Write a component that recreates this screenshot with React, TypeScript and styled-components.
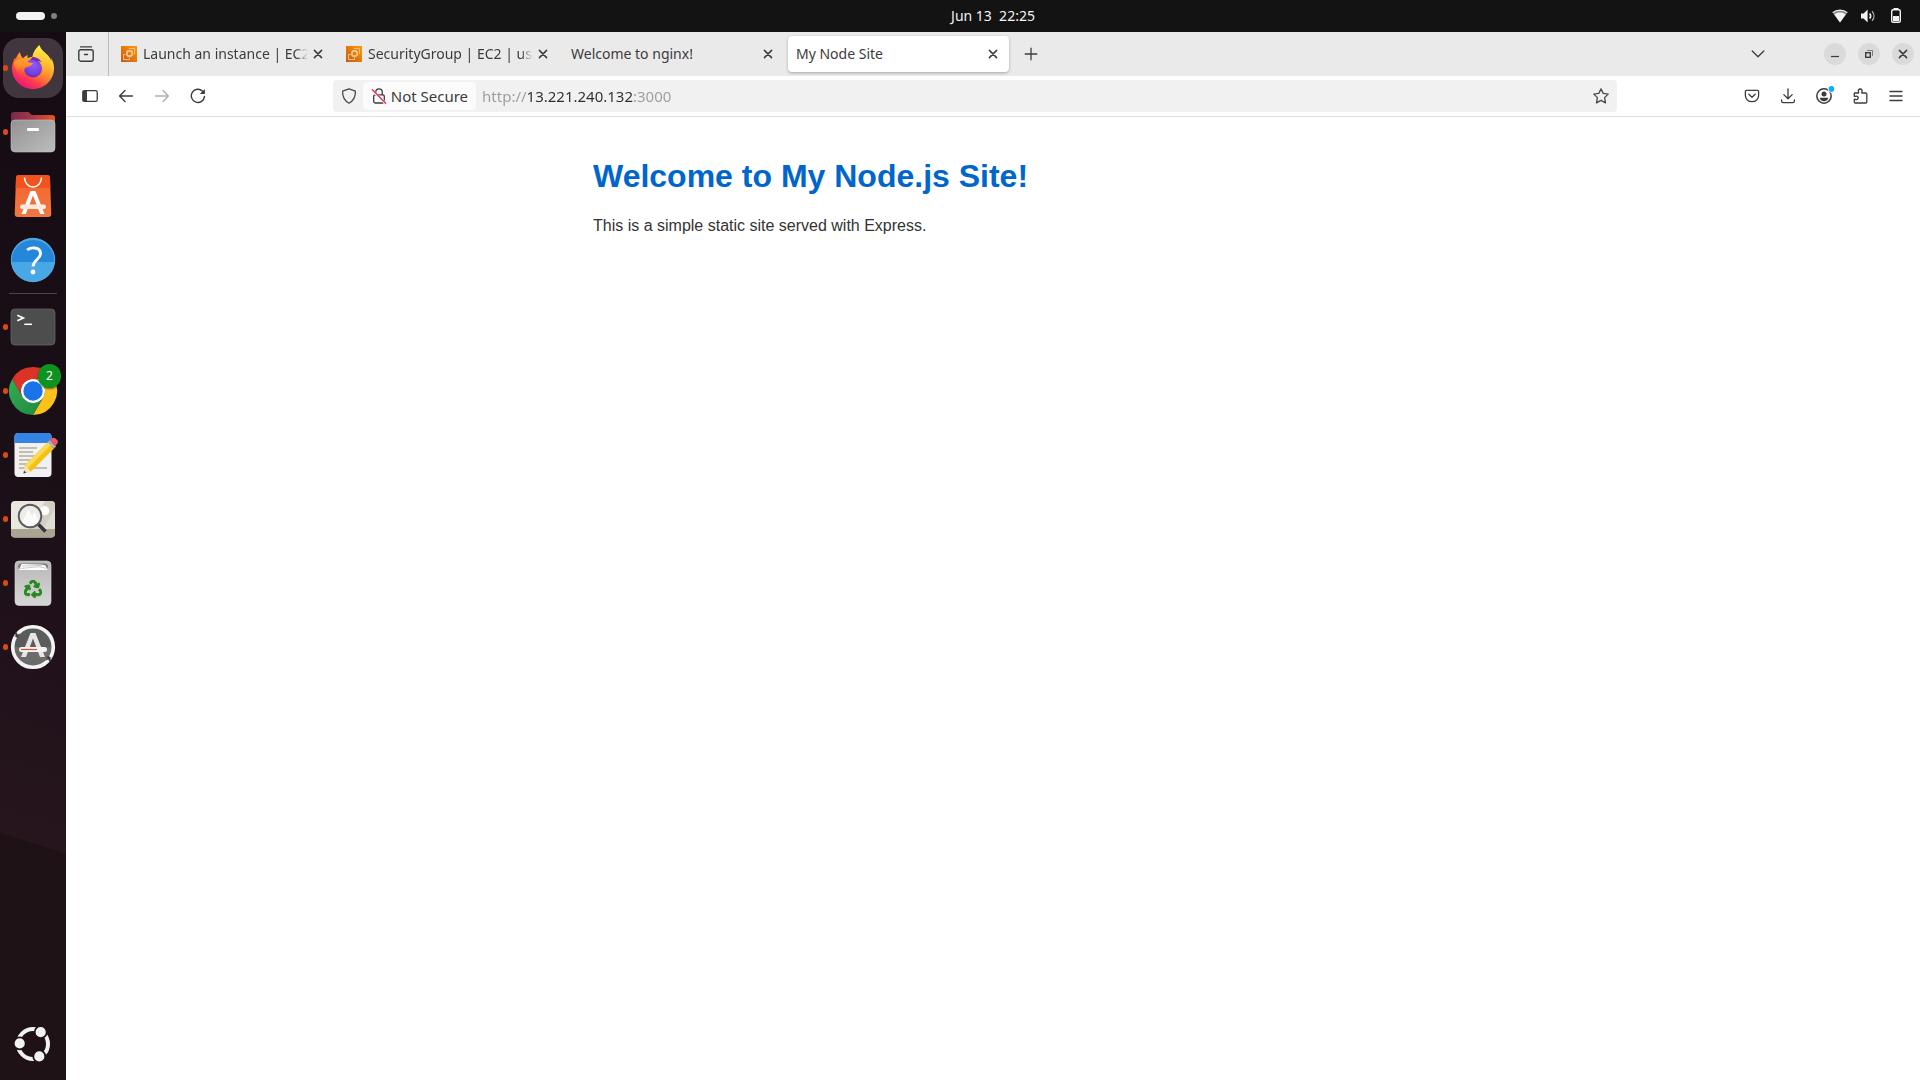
import React from "react";
import styled, { createGlobalStyle } from "styled-components";
import { FaRecycle } from "react-icons/fa";

const uiFont = `"Noto Sans", "Open Sans", sans-serif`;

const GlobalStyle = createGlobalStyle`
  *, *::before, *::after { box-sizing: border-box; }
  html, body { margin: 0; padding: 0; }
  body { background: #fff; font-family: ${uiFont}; color: #3c3c3c; }
  button { font: inherit; color: inherit; background: none; border: 0; padding: 0; cursor: default; }
`;

/* ---------- Shell ---------- */

const Desktop = styled.div`
  display: flex;
  flex-direction: column;
  min-height: 100vh;
`;

const TopBar = styled.header`
  display: grid;
  grid-template-columns: 66px 1fr auto 1fr;
  align-items: center;
  height: 32px;
  background: #131313;
  color: #f2f2f2;
`;

const Workspaces = styled.button`
  display: flex;
  align-items: center;
  gap: 6px;
  justify-self: center;
  padding-left: 6px;
`;

const WorkspaceMark = styled.span<{ $active?: boolean }>`
  width: ${(p) => (p.$active ? 29 : 6)}px;
  height: ${(p) => (p.$active ? 8 : 6)}px;
  border-radius: 4px;
  background: ${(p) => (p.$active ? "#f2f2f2" : "#808080")};
`;

const Clock = styled.button`
  grid-column: 3;
  font-size: 14px;
  line-height: 20px;
  white-space: pre;
`;

const SystemStatus = styled.button`
  display: flex;
  align-items: center;
  gap: 12px;
  justify-self: end;
  padding-right: 16px;
`;

const Body = styled.div`
  display: flex;
  flex: 1;
`;

/* ---------- Dock ---------- */

const Dock = styled.nav`
  display: flex;
  flex-direction: column;
  flex: none;
  width: 66px;
  padding: 4px 0;
  background: linear-gradient(
    197.6deg,
    #150b12 0%,
    #1a0f16 38%,
    #20111a 58%,
    #26151d 76.8%,
    #1e1217 76.9%,
    #1f1217 100%
  );
`;

const DockItem = styled.button<{ $active?: boolean; $running?: boolean }>`
  position: relative;
  display: grid;
  place-items: center;
  width: 60px;
  height: 60px;
  margin: 2px 3px;
  border-radius: 16px;
  background: ${(p) => (p.$active ? "#41363d" : "transparent")};

  &::before {
    content: "";
    position: absolute;
    left: 0;
    top: 27px;
    width: 5px;
    height: 6px;
    border-radius: 3px;
    background: ${(p) => (p.$running ? "#da4a16" : "transparent")};
  }
`;

const DockDivider = styled.hr`
  width: 48px;
  height: 1px;
  margin: 1px auto;
  border: 0;
  background: #4e454a;
`;

const DockSpacer = styled.div`
  flex: 1;
`;

const Badge = styled.span`
  position: absolute;
  top: 3px;
  right: 2px;
  width: 23px;
  height: 24px;
  border-radius: 12px;
  background: #0e9220;
  box-shadow: 0 1px 2px rgba(0, 0, 0, 0.5);
  color: #fff;
  font-size: 12px;
  line-height: 24px;
  text-align: center;
`;

const AppSvg = styled.svg`
  width: 48px;
  height: 48px;
  overflow: visible;
`;

/* ---------- Browser ---------- */

const Browser = styled.main`
  display: flex;
  flex-direction: column;
  flex: 1;
  min-width: 0;
  background: #fff;
`;

const TabStrip = styled.div`
  display: flex;
  align-items: center;
  height: 44px;
  padding-right: 6px;
  background: #eaeaea;
`;

const StripStart = styled.div`
  display: grid;
  place-items: center;
  align-self: stretch;
  width: 43px;
  margin-right: 4px;
  padding-right: 3px;
  border-right: 1px solid #bdbdbd;
`;

const Tabs = styled.div`
  display: flex;
  gap: 4px;
`;

const Tab = styled.div<{ $selected?: boolean }>`
  display: flex;
  align-items: center;
  width: 221px;
  height: 36px;
  padding: 0 6px 0 8px;
  border-radius: 4px;
  background: ${(p) => (p.$selected ? "#fff" : "transparent")};
  box-shadow: ${(p) => (p.$selected ? "0 1px 3px rgba(0, 0, 0, 0.3)" : "none")};
`;

const TabTitle = styled.button<{ $fade?: boolean }>`
  flex: 1;
  min-width: 0;
  height: 24px;
  overflow: hidden;
  font-size: 14px;
  line-height: 24px;
  text-align: left;
  white-space: nowrap;
  mask-image: ${(p) =>
    p.$fade ? "linear-gradient(to left, transparent, #000 12px)" : "none"};
`;

const Favicon = styled.svg`
  flex: none;
  width: 16px;
  height: 16px;
  margin-right: 6px;
`;

const TabClose = styled.button`
  display: grid;
  place-items: center;
  width: 20px;
  height: 20px;
`;

const IconButton = styled.button<{ $faded?: boolean }>`
  display: grid;
  place-items: center;
  width: 36px;
  height: 32px;
  color: ${(p) => (p.$faded ? "#b0b0b0" : "#3c3c3c")};
`;

const NewTab = styled(IconButton)`
  margin-left: 4px;
`;

const StripSpacer = styled.div`
  flex: 1;
`;

const WindowControls = styled.div`
  display: flex;
  gap: 12px;
  margin-left: 48px;
`;

const WindowButton = styled.button`
  display: grid;
  place-items: center;
  width: 22px;
  height: 22px;
  border-radius: 50%;
  background: #dadada;
`;

const Toolbar = styled.div`
  display: flex;
  align-items: center;
  height: 41px;
  padding: 0 6px;
  border-bottom: 1px solid #e0e0e0;
`;

const Spring = styled.div`
  flex: 1 1 0;
`;

const UrlBar = styled.form`
  display: flex;
  align-items: center;
  flex: 11 1 0;
  min-width: 0;
  height: 32px;
  border-radius: 4px;
  background: #f1f1f1;
`;

const UrlButton = styled.button`
  display: grid;
  place-items: center;
  width: 32px;
  height: 32px;
  color: #4a4a4a;
`;

const Identity = styled.button`
  display: flex;
  align-items: center;
  gap: 4px;
  height: 28px;
  margin-right: 6px;
  margin-left: -2px;
  padding: 0 8px;
  border-radius: 4px;
  background: #fbfbfb;
  font-size: 15px;
  line-height: 28px;
  white-space: nowrap;
`;

const UrlInput = styled.input`
  flex: 1;
  min-width: 0;
  height: 28px;
  padding: 0;
  border: 0;
  outline: 0;
  font-family: ${uiFont};
  font-size: 15px;
  color: #2f2f2f;
  background: linear-gradient(
    to right,
    #9c9c9c 46px,
    #2f2f2f 46px,
    #2f2f2f 152px,
    #9c9c9c 152px
  );
  background-clip: text;
  -webkit-background-clip: text;
  -webkit-text-fill-color: transparent;
`;

/* ---------- Page ---------- */

const Page = styled.article`
  width: 100%;
  max-width: 800px;
  margin: 40px auto;
  font-family: "Liberation Sans", Arial, sans-serif;
  color: #333;
`;

const Heading = styled.h1`
  margin: 0 0 22px;
  font-size: 32px;
  line-height: 38px;
  font-weight: 700;
  color: #0066cc;
`;

const Paragraph = styled.p`
  margin: 0;
  font-size: 16px;
  line-height: 18px;
`;

/* ---------- Small icons ---------- */

type IconProps = { children: React.ReactNode; size?: number; width?: number };

const Icon = ({ children, size = 16, width = 1.3 }: IconProps) => (
  <svg
    width={size}
    height={size}
    viewBox="0 0 16 16"
    fill="none"
    stroke="currentColor"
    strokeWidth={width}
    strokeLinecap="round"
    strokeLinejoin="round"
    aria-hidden="true"
  >
    {children}
  </svg>
);

const CloseIcon = () => (
  <Icon width={1.5}>
    <path d="M4.4 4.4 11.6 11.6M11.6 4.4 4.4 11.6" />
  </Icon>
);

const Ec2Favicon = () => (
  <Favicon viewBox="0 0 16 16" aria-hidden="true">
    <defs>
      <linearGradient id="ec2" x1="0" y1="1" x2="1" y2="0">
        <stop offset="0" stopColor="#cc5a0c" />
        <stop offset="1" stopColor="#fa9a08" />
      </linearGradient>
    </defs>
    <rect width="16" height="16" fill="url(#ec2)" />
    <g fill="none" stroke="#fff">
      <rect x="6" y="5" width="5" height="5" rx=".6" strokeWidth="1" />
      <path d="M8 3.200V2.500h5.500v5.500h-1" strokeWidth=".6" opacity=".75" />
      <path d="M4.500 8.500h-2v5h6v-2" strokeWidth=".7" opacity=".8" />
    </g>
  </Favicon>
);

const TabOverviewIcon = () => (
  <Icon width={1.4}>
    <path d="M2.6.9h10.8" />
    <rect x=".8" y="3.8" width="14.4" height="11.4" rx="2" />
    <path d="M6.5 8.5h3" />
  </Icon>
);

const SidebarIcon = () => (
  <Icon>
    <rect x=".8" y="2.6" width="14.4" height="10.8" rx="1.4" />
    <path d="M1 3h3.4v10H1z" fill="currentColor" stroke="none" />
    <path d="M4.4 2.8v10.4" strokeWidth="1" />
  </Icon>
);

const BackIcon = () => (
  <Icon width={1.4}>
    <path d="M14.4 8H1.8M7 2.6 1.6 8 7 13.4" />
  </Icon>
);

const ForwardIcon = () => (
  <Icon width={1.4}>
    <path d="M1.6 8h12.6M9 2.6 14.4 8 9 13.4" />
  </Icon>
);

const ReloadIcon = () => (
  <Icon width={1.4}>
    <path d="M14.5 8.4A6.6 6.6 0 1 1 12.6 3.2" />
    <path d="M14.9 1v5h-5z" fill="currentColor" stroke="none" />
  </Icon>
);

const ShieldIcon = () => (
  <Icon>
    <path d="M8 .8 14.4 3.2C14.6 8.600 12.6 12.6 8 15.200 3.400 12.600 1.400 8.600 1.600 3.200Z" />
  </Icon>
);

const InsecureIcon = () => (
  <Icon>
    <path d="M4.700 6.600V4.200a3.300 3.300 0 0 1 6.600 0V6.600" />
    <rect x="2.700" y="6.800" width="10.600" height="8.200" rx="1.500" />
    <path d="M1.600 2.800 14.600 15.400" stroke="#fbfbfb" strokeWidth="2.600" />
    <path d="M1.400 1.800 14.600 15.200" stroke="#e22850" strokeWidth="1.300" />
  </Icon>
);

const StarIcon = () => (
  <Icon>
    <path d="M8 .9 10.200 5.400 15.200 6.100 11.600 9.600 12.500 14.900 8 12.400 3.500 14.900 4.400 9.600.8 6.100 5.800 5.400Z" />
  </Icon>
);

const PocketIcon = () => (
  <Icon>
    <path d="M2.600 2.400h10.800a1.200 1.200 0 0 1 1.200 1.200v4.200a6.600 5.800 0 0 1-13.200 0V3.600a1.200 1.200 0 0 1 1.200-1.200Z" />
    <path d="M4.800 6.200 8 9.200l3.200-3" />
  </Icon>
);

const DownloadIcon = () => (
  <Icon>
    <path d="M8 .8v9.800M3.800 6.600 8 10.800l4.200-4.200M1.600 11.800v1.200a1.600 1.600 0 0 0 1.600 1.600h9.600a1.600 1.600 0 0 0 1.600-1.600v-1.200" />
  </Icon>
);

const AccountIcon = () => (
  <svg width="20" height="20" viewBox="-2 -2 20 20" fill="none" aria-hidden="true">
    <circle cx="8" cy="8" r="7.200" stroke="currentColor" strokeWidth="1.500" />
    <circle cx="8" cy="6" r="2.500" fill="currentColor" />
    <path d="M3.800 9.800h8.400c0 2-1.800 3.400-4.200 3.400S3.800 11.800 3.800 9.800Z" fill="currentColor" />
    <circle cx="15.500" cy="1" r="3.800" fill="#fff" />
    <circle cx="15.500" cy="1" r="2.900" fill="#08b0fb" />
  </svg>
);

const ExtensionsIcon = () => (
  <Icon>
    <path d="M2.600 5h3.600c.6 0 .5-.5.3-1-.7-1.600.2-3 1.700-3s2.400 1.400 1.700 3c-.2.500-.3 1 .3 1h3.400a1.200 1.200 0 0 1 1.200 1.200v7.600a1.200 1.200 0 0 1-1.200 1.200H3.300a1 1 0 0 1-1-1v-2.300c0-.6.500-.5 1-.3 1.500.600 2.900-.2 2.900-1.600S4.800 7.700 3.300 8.300c-.5.200-1 .200-1-.4V5.300Z" />
  </Icon>
);

const MenuIcon = () => (
  <Icon width={1.300}>
    <path d="M2 3.500h12M2 8h12M2 12.500h12" />
  </Icon>
);

const PlusIcon = () => (
  <Icon width={1.300}>
    <path d="M8 2.200v11.600M2.200 8h11.600" />
  </Icon>
);

const ChevronIcon = () => (
  <Icon width={1.300}>
    <path d="M2.200 5 8 10.800 13.800 5" />
  </Icon>
);

const WifiIcon = () => (
  <svg width="16" height="16" viewBox="0 0 16 16" aria-hidden="true">
    <path d="M.6 4.600C5 1.200 11 1.200 15.400 4.600L8 14.600Z" fill="#8a8a8a" />
    <path d="M.6 4.600C5 1.200 11 1.200 15.400 4.600" fill="none" stroke="#f2f2f2" strokeWidth="1.200" />
    <path d="M2.200 6.400C5.600 4 10.400 4 13.800 6.400L8 14.600Z" fill="#f2f2f2" />
  </svg>
);

const VolumeIcon = () => (
  <svg width="16" height="16" viewBox="0 0 16 16" fill="none" stroke="#f2f2f2" aria-hidden="true">
    <path d="M1 5.600h2.600L7.600 1.600v12.800L3.600 10.400H1Z" fill="#f2f2f2" stroke="none" />
    <path d="M9.600 5.400c1.300 1.500 1.300 3.700 0 5.200" strokeWidth="1.500" />
    <path d="M12 3.200c2.600 2.800 2.600 6.800 0 9.600" strokeWidth="1.300" opacity=".7" />
  </svg>
);

const BatteryIcon = () => (
  <svg width="16" height="16" viewBox="0 0 16 16" aria-hidden="true">
    <rect x="5.500" y="0" width="5" height="2" fill="#f2f2f2" />
    <rect x="3.700" y="1.700" width="8.600" height="12.600" rx="1.500" fill="none" stroke="#f2f2f2" strokeWidth="1.400" />
    <rect x="5" y="8" width="6" height="5" fill="#f2f2f2" />
  </svg>
);

const MinimizeIcon = () => (
  <Icon width={1.200}>
    <path d="M4 10.500h8" strokeLinecap="butt" />
  </Icon>
);

const RestoreIcon = () => (
  <Icon width={1.400}>
    <rect x="4.700" y="6.700" width="4.600" height="4.600" strokeLinejoin="miter" />
    <path d="M6.500 4.500h5v5" strokeWidth="1" opacity=".6" strokeLinejoin="miter" />
  </Icon>
);

/* ---------- Dock app icons ---------- */

const FirefoxApp = () => (
  <AppSvg viewBox="0 0 48 48" aria-hidden="true">
    <defs>
      <linearGradient id="ffBody" x1=".8" y1=".1" x2=".25" y2=".95">
        <stop offset="0" stopColor="#fff44f" />
        <stop offset=".3" stopColor="#ffb931" />
        <stop offset=".55" stopColor="#ff7b2e" />
        <stop offset=".78" stopColor="#ff3a50" />
        <stop offset="1" stopColor="#e9177c" />
      </linearGradient>
      <linearGradient id="ffTail" x1=".5" y1="0" x2=".5" y2="1">
        <stop offset="0" stopColor="#fff04c" />
        <stop offset=".5" stopColor="#ffc233" />
        <stop offset="1" stopColor="#ff8a2a" stopOpacity="0" />
      </linearGradient>
      <radialGradient id="ffGlobe" cx=".55" cy=".3" r=".75">
        <stop offset="0" stopColor="#9059ff" />
        <stop offset=".6" stopColor="#7642e5" />
        <stop offset="1" stopColor="#5b2bb5" />
      </radialGradient>
      <linearGradient id="ffHead" x1="0" y1="0" x2="0" y2="1">
        <stop offset="0" stopColor="#ffa22a" />
        <stop offset=".4" stopColor="#ff8a2a" />
        <stop offset="1" stopColor="#ff4a48" stopOpacity="0" />
      </linearGradient>
    </defs>
    <path
      d="M11 8C8.500 10.500 7.200 13 6.800 15.500L6 13.500C4 17 3 20.500 3 24.500 3 36 12.500 45 24 45S45 36 45 24.500C45 20 43.800 16.500 41.500 13.500 42.300 15.500 42.500 16.500 42.400 17.500 41 12.500 37.500 10 34.500 7.500 32 5.300 31 3.500 30.500 1.300 27 4 24 9 23.500 13 21.500 13 20 13.500 18.800 14.300 18.500 13.200 18.400 12.300 18.600 11 16.500 12 15 13.100 14 14.300 12.300 12.500 11.300 10.500 11 8Z"
      fill="url(#ffBody)"
    />
    <path
      d="M30.500 1.300C27 4 24 9 23.500 13 29 13.500 33.800 17 34.300 24 34.500 30 31 34 26 35.500 35 37 41.500 30 41.800 22 42 14.500 38 10.500 34.500 7.500 32 5.300 31 3.500 30.500 1.300Z"
      fill="url(#ffTail)"
      opacity=".85"
    />
    <circle cx="24" cy="24.500" r="9" fill="url(#ffGlobe)" />
    <path d="M23.500 13C28 13 31 15.500 32.500 18 30.500 17 29 17 28 17.300 30 19 31 21 31 21 28 17 25 15.500 21 16Z" fill="#6a2fc0" />
    <path
      d="M5 19C8 15.500 11 14.300 14 14.800 16.500 15.500 17.300 16.500 18 17.600 19.500 18.600 22 18.800 24 19 23.800 21 22 22 19.800 22.500 17 23.300 15.500 24.500 15.200 27 15 30 16.500 32 18.500 33.500 12 34 6 28 5 19Z"
      fill="url(#ffHead)"
    />
  </AppSvg>
);

const FilesApp = () => (
  <AppSvg viewBox="0 0 48 48" aria-hidden="true">
    <defs>
      <linearGradient id="flBack" x1="0" y1="0" x2="1" y2="0">
        <stop offset="0" stopColor="#77294f" />
        <stop offset=".5" stopColor="#a83a44" />
        <stop offset="1" stopColor="#ea5420" />
      </linearGradient>
      <linearGradient id="flFront" x1="0" y1="0" x2="1" y2="1">
        <stop offset="0" stopColor="#929292" />
        <stop offset="1" stopColor="#bdbdbd" />
      </linearGradient>
    </defs>
    <path d="M5 4H19C21 4 21 7 23.500 7H43a3 3 0 0 1 3 3V30H2V7a3 3 0 0 1 3-3Z" fill="url(#flBack)" />
    <rect x="2" y="12" width="44" height="32" rx="4" fill="url(#flFront)" stroke="#c4c4c4" strokeWidth=".6" />
    <rect x="18" y="20" width="12" height="3" rx="1" fill="#fff" />
  </AppSvg>
);

const SoftwareApp = () => (
  <AppSvg viewBox="0 0 48 48" aria-hidden="true">
    <defs>
      <linearGradient id="swBag" x1="0" y1="0" x2="0" y2="1">
        <stop offset="0" stopColor="#f66330" />
        <stop offset="1" stopColor="#f0783e" />
      </linearGradient>
    </defs>
    <path d="M10 3h28a3 3 0 0 1 3 3l1.300 36a3 3 0 0 1-3 3H8.700a3 3 0 0 1-3-3L7 6a3 3 0 0 1 3-3Z" fill="url(#swBag)" />
    <path d="M10 3h28a3 3 0 0 1 3 3l.3 10H6.700L7 6a3 3 0 0 1 3-3Z" fill="#f1531e" />
    <path d="M15.500 5.500a8.500 9.500 0 0 0 17 0" fill="none" stroke="#fff" strokeWidth="1.600" />
    <path d="M21.500 19h5l9 23h-4.300L24 23.500 16.800 42h-4.300Z" fill="#fff" />
    <rect x="11" y="32.500" width="26" height="4.500" rx="2.200" fill="#ffe9df" />
    <path d="M20.500 25 24 19l3.500 6-3.500-1.500Z" fill="#fff" />
  </AppSvg>
);

const HelpApp = () => (
  <AppSvg viewBox="0 0 48 48" aria-hidden="true">
    <circle cx="24" cy="24" r="22" fill="#4aa7e6" />
    <path d="M2 26a22 22 0 1 1 44 0Z" fill="#2487da" />
    <circle cx="24" cy="24" r="21.700" fill="none" stroke="#5fb2ea" strokeWidth=".7" />
    <path d="M18.200 14C21 11 31.500 10.500 31.500 17.500 31.500 23.500 24.300 23.500 24 30.500" fill="none" stroke="#fff" strokeWidth="2.900" />
    <circle cx="24" cy="36" r="2.400" fill="#fff" />
  </AppSvg>
);

const TerminalApp = () => (
  <AppSvg viewBox="0 0 48 48" aria-hidden="true">
    <rect x="2" y="6" width="44" height="36" rx="4" fill="#4d4d4d" stroke="#636363" strokeWidth=".8" />
    <path d="M8.300 12.300 14.300 15 8.300 17.800" fill="none" stroke="#fff" strokeWidth="1.700" />
    <path d="M15.300 21.300H23" stroke="#fff" strokeWidth="1.500" />
  </AppSvg>
);

const ChromeApp = () => (
  <AppSvg viewBox="0 0 48 48" aria-hidden="true">
    <defs>
      <linearGradient id="crGreen" x1="0" y1=".2" x2=".8" y2="1">
        <stop offset="0" stopColor="#34a853" />
        <stop offset="1" stopColor="#1e8e3e" />
      </linearGradient>
    </defs>
    <path d="M3.200 12A24 24 0 0 1 44.800 12H24A12 12 0 0 0 13.600 30Z" fill="#de3226" />
    <path d="M44.800 12A24 24 0 0 1 24 48L34.400 30A12 12 0 0 0 24 12Z" fill="#fcc21b" />
    <path d="M24 48A24 24 0 0 1 3.200 12L13.600 30A12 12 0 0 0 34.400 30Z" fill="url(#crGreen)" />
    <circle cx="24" cy="24" r="12" fill="#fff" />
    <circle cx="24" cy="24" r="9.700" fill="#1a73e8" />
  </AppSvg>
);

const EditorApp = () => (
  <AppSvg viewBox="0 0 48 48" aria-hidden="true">
    <rect x="5.500" y="2" width="37" height="44" rx="4" fill="#f1f1f1" />
    <path d="M9.500 2h29a4 4 0 0 1 4 4v6h-37V6a4 4 0 0 1 4-4Z" fill="#3584e4" />
    <path d="M10 17h18M10 21h14M10 25h17M10 29h13M10 33h10M10 37h8M24 37h14" stroke="#c2beb2" strokeWidth="1.800" />
    <path d="M14.500 42.500 15.800 34.200 38.500 11.500 45 17.500 22 40.500Z" fill="#f5c211" />
    <path d="M15.800 34.200 38.500 11.500 41.500 14.200 18.500 37.500Z" fill="#fadb59" />
    <path d="M14.500 42.500 15.800 34.200 22 40.500Z" fill="#f4e3bd" />
    <path d="M14.500 42.500 15 39.500 17.300 41.700Z" fill="#3d3846" />
    <path d="m38.500 11.500 2.200-2.200 6.300 6.200-2 2Z" fill="#b5b2ae" />
    <path d="m40.700 9.300 1.800-1.600a3.200 3.200 0 0 1 4.400 0l1 1a3.200 3.200 0 0 1 0 4.400L46.500 15Z" fill="#ed5b6b" />
  </AppSvg>
);

const ViewerApp = () => (
  <AppSvg viewBox="0 0 48 48" aria-hidden="true">
    <defs>
      <clipPath id="vwClip">
        <rect x="2" y="6" width="44" height="36.500" rx="4" />
      </clipPath>
    </defs>
    <g clipPath="url(#vwClip)">
      <rect x="2" y="6" width="44" height="37" fill="#e9e7de" />
      <path d="M36 6 20 34h26V6Z" fill="#d2cfc2" />
      <path d="M46 14 34 34h12Z" fill="#dedfd2" />
      <rect x="2" y="34" width="44" height="9" fill="#aaa493" />
    </g>
    <circle cx="35.700" cy="15.700" r="4.600" fill="#fdfdfb" />
    <circle cx="21" cy="21" r="11" fill="#ecece8" />
    <path d="M13 28 19 15l4 6 3-4 4 10a11 11 0 0 1-17 1Z" fill="#fbfbfa" />
    <circle cx="21" cy="21" r="11.300" fill="none" stroke="#5c5c60" strokeWidth="1.900" />
    <path d="m29.500 29.500 7 7" stroke="#35353a" strokeWidth="3.600" />
  </AppSvg>
);

const TrashApp = () => (
  <AppSvg viewBox="0 0 48 48" aria-hidden="true">
    <defs>
      <linearGradient id="trBin" x1="0" y1="0" x2="0" y2="1">
        <stop offset="0" stopColor="#b8b8b8" />
        <stop offset="1" stopColor="#d6d6d6" />
      </linearGradient>
    </defs>
    <rect x="6" y="2" width="36" height="44.500" rx="4" fill="url(#trBin)" stroke="#dadada" strokeWidth=".6" />
    <path d="M9 8a3.500 3.500 0 0 1 3.500-3.500h23A3.500 3.500 0 0 1 39 8l-1.500 3h-27Z" fill="#7a7a7a" />
    <path d="M10 11 12.500 5l20 .5 4 1L38.500 11Z" fill="#fff" />
    <path d="m11.500 9.500 18-1.800 7.500 1.600M13 7l20-.5" fill="none" stroke="#bcbcbc" strokeWidth=".8" />
    <FaRecycle x={15} y={21} width={18} height={19} size={18} color="#26891b" stroke="#26891b" strokeWidth={26} />
  </AppSvg>
);

const UpdaterApp = () => (
  <AppSvg viewBox="0 0 48 48" aria-hidden="true">
    <circle cx="24" cy="24" r="21.500" fill="#5c5c5c" />
    <path d="M3 24h42a21 21 0 0 1-42 0Z" fill="#6c6c6c" />
    <circle cx="24" cy="24" r="20.300" fill="none" stroke="#f3f3f3" strokeWidth="3.600" />
    <path d="m5 13 6-2.500-1 5ZM43 35l-6 2.500 1-5Z" fill="#5c5c5c" />
    <path d="M6.500 9.500 9 14.500M41.500 38.500 39 33.500" stroke="#3c3c3c" strokeWidth="2" />
    <path d="M21.500 10h5L36 34h-5L24 15.500 17 34h-5Z" fill="#e6e6e6" />
    <rect x="10" y="24" width="28" height="5" rx="2.500" fill="#f3f3f3" />
    <path d="M12 26.500h16" stroke="#e2502a" strokeWidth="1.200" />
  </AppSvg>
);

const UbuntuLogo = () => (
  <AppSvg viewBox="0 0 48 48" aria-hidden="true">
    <circle cx="24" cy="24" r="15" fill="none" stroke="#f2f2f2" strokeWidth="4" />
    {[
      [31.700, 12.200],
      [10.700, 23.400],
      [30.300, 36.400],
    ].map(([cx, cy]) => (
      <circle key={cx} cx={cx} cy={cy} r="6" fill="#f2f2f2" stroke="#1f1217" strokeWidth="1.800" />
    ))}
  </AppSvg>
);

/* ---------- Data ---------- */

type DockApp = {
  name: string;
  art: React.ReactNode;
  active?: boolean;
  running?: boolean;
  badge?: number;
};

const pinnedApps: DockApp[] = [
  { name: "Firefox", art: <FirefoxApp />, active: true, running: true },
  { name: "Files", art: <FilesApp />, running: true },
  { name: "App Center", art: <SoftwareApp /> },
  { name: "Help", art: <HelpApp /> },
];

const openApps: DockApp[] = [
  { name: "Terminal", art: <TerminalApp />, running: true },
  { name: "Google Chrome", art: <ChromeApp />, running: true, badge: 2 },
  { name: "Text Editor", art: <EditorApp />, running: true },
  { name: "Image Viewer", art: <ViewerApp />, running: true },
  { name: "Trash", art: <TrashApp />, running: true },
  { name: "Software Updater", art: <UpdaterApp />, running: true },
];

const tabs = [
  { title: "Launch an instance | EC2 |", ec2: true },
  { title: "SecurityGroup | EC2 | us-e", ec2: true },
  { title: "Welcome to nginx!" },
  { title: "My Node Site", selected: true },
];

const DockApps = ({ apps }: { apps: DockApp[] }) => (
  <>
    {apps.map((app) => (
      <DockItem
        key={app.name}
        type="button"
        aria-label={app.name}
        $active={app.active}
        $running={app.running}
      >
        {app.art}
        {app.badge !== undefined && <Badge>{app.badge}</Badge>}
      </DockItem>
    ))}
  </>
);

export default function App() {
  return (
    <Desktop>
      <GlobalStyle />
      <TopBar>
        <Workspaces type="button" aria-label="Workspaces">
          <WorkspaceMark $active />
          <WorkspaceMark />
        </Workspaces>
        <Clock type="button">{"Jun 13  22:25"}</Clock>
        <SystemStatus type="button" aria-label="System status">
          <WifiIcon />
          <VolumeIcon />
          <BatteryIcon />
        </SystemStatus>
      </TopBar>
      <Body>
        <Dock aria-label="Dock">
          <DockApps apps={pinnedApps} />
          <DockDivider />
          <DockApps apps={openApps} />
          <DockSpacer />
          <DockItem type="button" aria-label="Show applications">
            <UbuntuLogo />
          </DockItem>
        </Dock>
        <Browser>
          <TabStrip>
            <StripStart>
              <IconButton type="button" aria-label="Recent browsing">
                <TabOverviewIcon />
              </IconButton>
            </StripStart>
            <Tabs>
              {tabs.map((tab) => (
                <Tab key={tab.title} $selected={tab.selected}>
                  {tab.ec2 && <Ec2Favicon />}
                  <TabTitle type="button" $fade={tab.ec2}>
                    {tab.title}
                  </TabTitle>
                  <TabClose type="button" aria-label="Close tab">
                    <CloseIcon />
                  </TabClose>
                </Tab>
              ))}
            </Tabs>
            <NewTab type="button" aria-label="New tab">
              <PlusIcon />
            </NewTab>
            <StripSpacer />
            <IconButton type="button" aria-label="List all tabs">
              <ChevronIcon />
            </IconButton>
            <WindowControls>
              <WindowButton type="button" aria-label="Minimize">
                <MinimizeIcon />
              </WindowButton>
              <WindowButton type="button" aria-label="Restore">
                <RestoreIcon />
              </WindowButton>
              <WindowButton type="button" aria-label="Close">
                <CloseIcon />
              </WindowButton>
            </WindowControls>
          </TabStrip>
          <Toolbar>
            <IconButton type="button" aria-label="Show sidebars">
              <SidebarIcon />
            </IconButton>
            <IconButton type="button" aria-label="Back">
              <BackIcon />
            </IconButton>
            <IconButton type="button" aria-label="Forward" $faded>
              <ForwardIcon />
            </IconButton>
            <IconButton type="button" aria-label="Reload">
              <ReloadIcon />
            </IconButton>
            <Spring />
            <UrlBar onSubmit={(e) => e.preventDefault()}>
              <UrlButton type="button" aria-label="Tracking protection">
                <ShieldIcon />
              </UrlButton>
              <Identity type="button">
                <InsecureIcon />
                Not Secure
              </Identity>
              <UrlInput
                type="text"
                aria-label="Address"
                defaultValue="http://13.221.240.132:3000"
                spellCheck={false}
              />
              <UrlButton type="button" aria-label="Bookmark this page">
                <StarIcon />
              </UrlButton>
            </UrlBar>
            <Spring />
            <IconButton type="button" aria-label="Save to Pocket">
              <PocketIcon />
            </IconButton>
            <IconButton type="button" aria-label="Downloads">
              <DownloadIcon />
            </IconButton>
            <IconButton type="button" aria-label="Account">
              <AccountIcon />
            </IconButton>
            <IconButton type="button" aria-label="Extensions">
              <ExtensionsIcon />
            </IconButton>
            <IconButton type="button" aria-label="Open menu">
              <MenuIcon />
            </IconButton>
          </Toolbar>
          <Page>
            <Heading>Welcome to My Node.js Site!</Heading>
            <Paragraph>This is a simple static site served with Express.</Paragraph>
          </Page>
        </Browser>
      </Body>
    </Desktop>
  );
}
